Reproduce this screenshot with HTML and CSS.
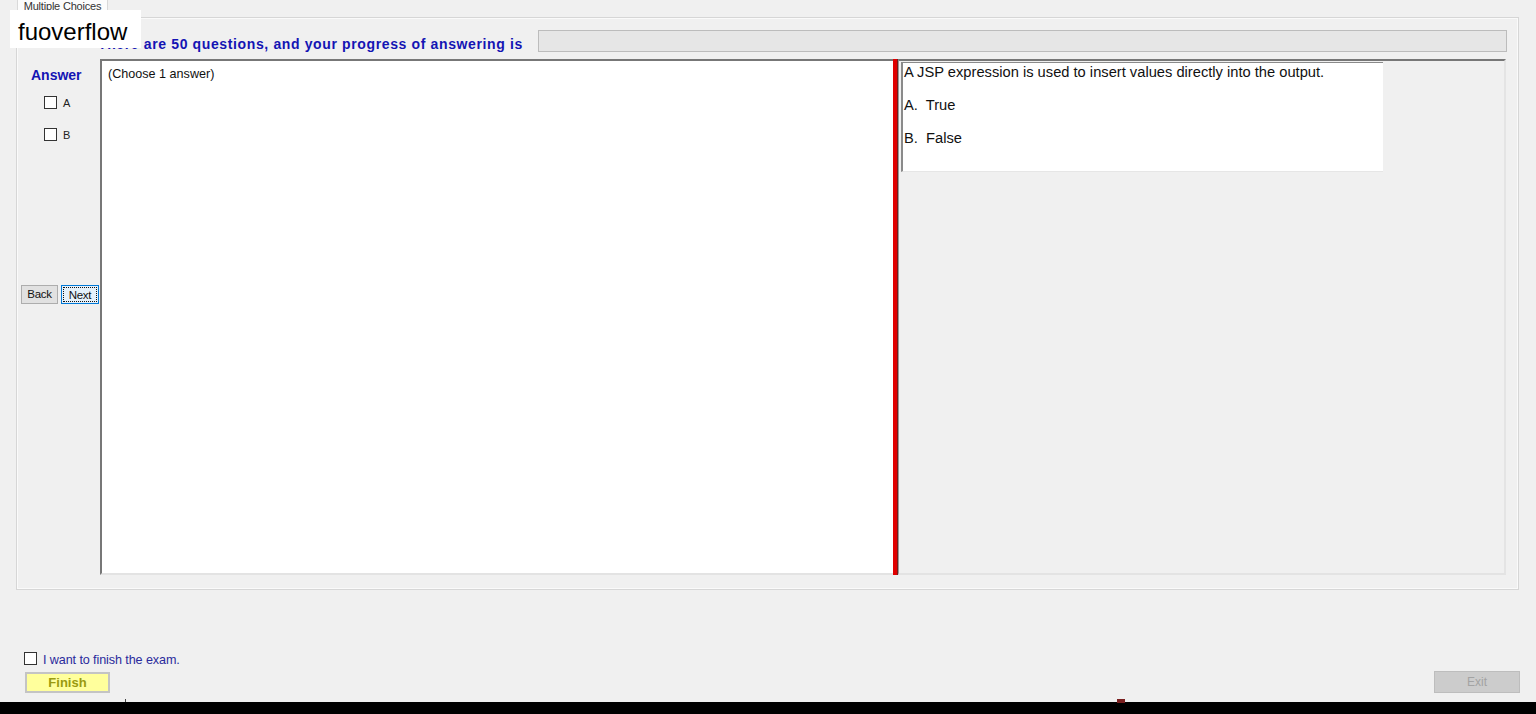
FILE: index.html
```html
<!DOCTYPE html>
<html>
<head>
<meta charset="utf-8">
<link rel="stylesheet" href="styles.css">
</head>
<body>
<div class="window">
  <div class="tabs"><div class="tab">Multiple Choices</div></div>
  <div class="panel">
    <div class="header">
      <div class="header-text">There are 50 questions, and your progress of answering is</div>
      <div class="progress"></div>
    </div>
    <div class="body">
      <div class="answer-col">
        <div class="answer-title">Answer</div>
        <label class="opt"><span class="cb"></span><span class="opt-label">A</span></label>
        <label class="opt"><span class="cb"></span><span class="opt-label">B</span></label>
        <div class="nav">
          <div class="btn back">Back</div>
          <div class="btn next"><span class="focus">Next</span></div>
        </div>
      </div>
      <div class="split">
        <div class="pane-left">(Choose 1 answer)</div>
        <div class="splitter"></div>
        <div class="pane-right">
          <div class="question">
            <p class="q-line">A JSP expression is used to insert values directly into the output.</p>
            <p class="q-line">A.&nbsp; True</p>
            <p class="q-line">B.&nbsp; False</p>
          </div>
        </div>
      </div>
    </div>
  </div>
  <div class="footer">
    <div class="footer-left">
      <label class="finish-row"><span class="cb"></span><span class="finish-label">I want to finish the exam.</span></label>
      <div class="finish-btn">Finish</div>
    </div>
    <div class="exit-btn">Exit</div>
  </div>
</div>
<div class="blackbar"><span class="mark-red"></span><span class="mark-tick"></span></div>
<div class="brand">fuoverflow</div>
</body>
</html>
```
FILE: styles.css
```css
html, body {
  margin: 0;
  padding: 0;
  width: 1536px;
  height: 714px;
  overflow: hidden;
  background: #f0f0f0;
  font-family: "Liberation Sans", Arial, sans-serif;
}
.window {
  height: 702px;
  display: flex;
  flex-direction: column;
  background: #f0f0f0;
}
.tabs {
  flex-shrink: 0;
  height: 17px;
  padding-left: 17px;
  display: flex;
  align-items: flex-end;
}
.tab {
  width: 91px;
  height: 20px;
  margin-bottom: -1px;
  background: #fcfcfc;
  border: 1px solid #d9d9d9;
  border-bottom: none;
  font-size: 11px;
  line-height: 14px;
  color: #333;
  text-align: center;
  box-sizing: border-box;
  overflow: hidden;
  letter-spacing: -0.2px;
}
.panel {
  flex-shrink: 0;
  margin-left: 16px;
  width: 1503px;
  height: 573px;
  box-sizing: border-box;
  border: 1px solid #d6d6d6;
  box-shadow: inset 0 0 0 1px #fafafa;
  display: flex;
  flex-direction: column;
}
.header {
  flex-shrink: 0;
  height: 41px;
  display: flex;
  align-items: flex-start;
}
.header-text {
  margin-left: 81px;
  margin-top: 18px;
  font-size: 14px;
  line-height: 16px;
  letter-spacing: 0.63px;
  font-weight: bold;
  color: #1414b4;
  white-space: nowrap;
}
.progress {
  margin-top: 12px;
  margin-left: 15px;
  flex: 1;
  margin-right: 11px;
  height: 22px;
  box-sizing: border-box;
  background: #e6e6e6;
  border: 1px solid #bcbcbc;
}
.body {
  flex-shrink: 0;
  height: 516px;
  display: flex;
}
.answer-col {
  width: 83px;
  display: flex;
  flex-direction: column;
  align-items: flex-start;
}
.answer-title {
  margin-top: 8px;
  margin-left: 14px;
  font-size: 14px;
  line-height: 16px;
  font-weight: bold;
  color: #1414b4;
}
.opt {
  display: flex;
  align-items: center;
  margin-left: 27px;
  height: 13px;
  margin-top: 13px;
}
.opt + .opt {
  margin-top: 19px;
}
.cb {
  width: 13px;
  height: 13px;
  box-sizing: border-box;
  border: 1px solid #333;
  background: #fff;
  display: inline-block;
}
.opt-label {
  margin-left: 6px;
  font-size: 11px;
  color: #222;
}
.nav {
  margin-top: 144px;
  margin-left: 4px;
  display: flex;
  gap: 3px;
}
.btn {
  height: 19px;
  box-sizing: border-box;
  font-size: 11.5px;
  line-height: 17px;
  text-align: center;
  color: #111;
  letter-spacing: -0.3px;
}
.back {
  width: 37px;
  background: #e1e1e1;
  border: 1px solid #adadad;
}
.next {
  width: 38px;
  background: #e5f1fb;
  border: 1px solid #0078d7;
  padding: 1px;
}
.focus {
  display: block;
  height: 15px;
  line-height: 14px;
  border: 1px dotted #111;
  box-sizing: border-box;
}
.split {
  width: 1406px;
  display: flex;
}
.pane-left {
  width: 793px;
  box-sizing: border-box;
  background: #fff;
  border-top: 2px solid #777;
  border-left: 2px solid #777;
  border-bottom: 2px solid #e3e3e3;
  padding: 6px 0 0 6px;
  font-size: 12.6px;
  line-height: 15px;
  color: #111;
}
.splitter {
  width: 5px;
  box-sizing: border-box;
  background: #e00000;
  border-right: 1px solid #7a1a1a;
}
.pane-right {
  width: 608px;
  box-sizing: border-box;
  background: #f0f0f0;
  border-top: 2px solid #777;
  border-left: 1px solid #999;
  border-right: 2px solid #e4e4e4;
  border-bottom: 2px solid #e3e3e3;
  padding: 1px 0 0 2px;
}
.question {
  width: 482px;
  height: 110px;
  box-sizing: border-box;
  background: #fff;
  border-left: 2px solid #8a8a8a;
  border-top: 1px solid #8a8a8a;
  border-bottom: 1px solid #e6e6e6;
  padding: 1px 0 0 1px;
}
.q-line {
  margin: 0 0 17px 0;
  font-size: 14.7px;
  line-height: 16px;
  color: #111;
}
.footer {
  flex: 1;
  display: flex;
  justify-content: space-between;
  align-items: flex-start;
  padding-top: 62px;
}
.footer-left {
  display: flex;
  flex-direction: column;
  align-items: flex-start;
  padding-left: 24px;
}
.finish-row {
  display: flex;
  align-items: center;
  height: 13px;
}
.finish-label {
  margin-left: 6px;
  font-size: 12.6px;
  color: #2a2a9c;
  margin-top: 3px;
  letter-spacing: -0.1px;
}
.finish-btn {
  margin-top: 7px;
  margin-left: 1px;
  width: 85px;
  height: 21px;
  box-sizing: border-box;
  background: #ffff9c;
  border: 2px solid #c4c4c4;
  font-size: 13px;
  line-height: 17px;
  font-weight: bold;
  color: #9a9a10;
  text-align: center;
}
.exit-btn {
  margin-top: 19px;
  margin-right: 16px;
  width: 86px;
  height: 22px;
  box-sizing: border-box;
  background: #cccccc;
  border: 1px solid #bdbdbd;
  font-size: 12px;
  line-height: 20px;
  color: #a3a3a3;
  text-align: center;
}
.blackbar {
  height: 12px;
  background: #000;
  position: relative;
}
.mark-red {
  position: absolute;
  left: 1117px;
  top: -3px;
  width: 8px;
  height: 4px;
  background: #7a2020;
}
.mark-tick {
  position: absolute;
  left: 125px;
  top: -3px;
  width: 1px;
  height: 3px;
  background: #444;
}
.brand {
  position: absolute;
  left: 10px;
  top: 10px;
  width: 131px;
  height: 38px;
  box-sizing: border-box;
  background: #fff;
  padding-left: 8px;
  font-size: 24px;
  line-height: 44px;
  color: #000;
}
```
